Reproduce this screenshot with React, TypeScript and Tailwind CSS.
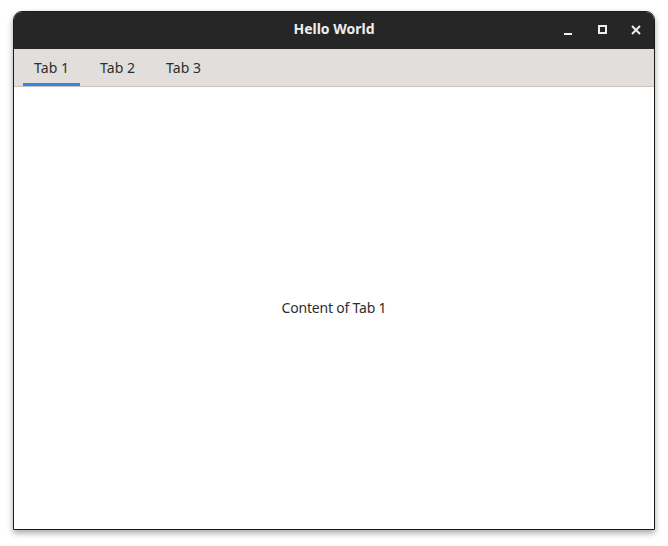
import React from "react";

export default function App() {
  const tabs = ["Tab 1", "Tab 2", "Tab 3"];
  return (
    <div className="w-[668px] h-[546px] bg-white pt-[11px] pl-[13px]" style={{ fontFamily: '"Noto Sans", "Open Sans", sans-serif' }}>
      <div className="w-[642px] h-[519px] flex flex-col rounded-t-[9px] border border-[#1b1b1b] bg-white shadow-[0_3px_6px_rgba(0,0,0,0.35)] overflow-hidden">
        <div className="h-[37px] shrink-0 bg-[#262626] flex items-center relative">
          <div className="flex-1 text-center text-[14px] font-bold text-[#eeeeee] leading-none pb-[3px]">Hello World</div>
          <div className="absolute right-0 top-0 h-full flex items-center pb-[2px]">
            <div className="w-[34px] h-full flex items-center justify-center">
              <div className="w-[8px] h-[2px] bg-[#eeeeee] mt-[8px]" />
            </div>
            <div className="w-[34px] h-full flex items-center justify-center">
              <div className="w-[9px] h-[9px] border-2 border-[#eeeeee]" />
            </div>
            <div className="w-[34px] h-full flex items-center justify-center mr-[1px]">
              <svg width="10" height="10" viewBox="0 0 10 10">
                <path d="M1 1 L9 9 M9 1 L1 9" stroke="#eeeeee" strokeWidth="2" />
              </svg>
            </div>
          </div>
        </div>
        <div className="h-[38px] shrink-0 bg-[#e1dedb] border-b border-[#c6c3c0] flex pl-[9px] gap-[9px]">
          {tabs.map((t, i) => (
            <div key={t} className={`w-[57px] h-full flex items-center justify-center text-[14px] text-[#2e2e2e] ${i === 0 ? "border-b-[3px] border-[#3584e4] pt-[3px]" : ""}`}>
              {t}
            </div>
          ))}
        </div>
        <div className="flex-1 flex items-center justify-center text-[14px] text-[#2e2e2e] tracking-[-0.2px] pb-[2px]">
          Content of Tab 1
        </div>
      </div>
    </div>
  );
}
